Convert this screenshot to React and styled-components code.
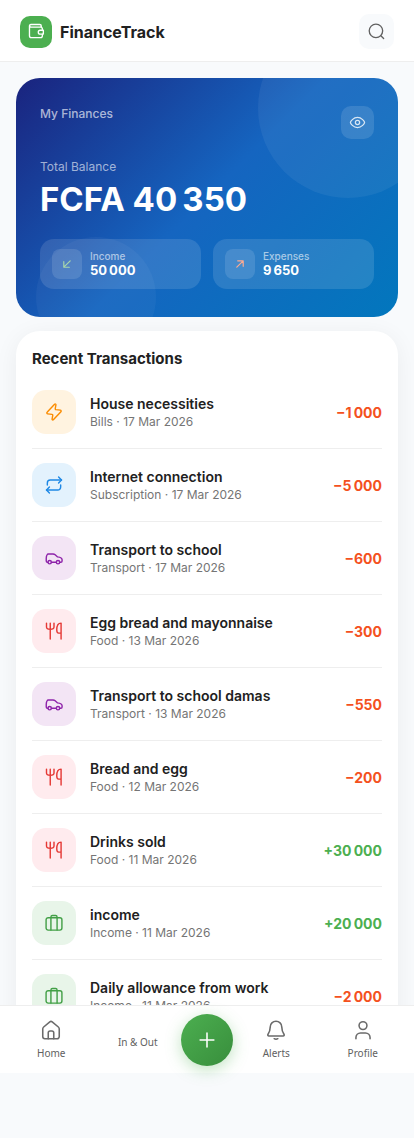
import React from "react";
import styled, { createGlobalStyle } from "styled-components";

const GlobalStyle = createGlobalStyle`
  *, *::before, *::after {
    box-sizing: border-box;
  }

  body {
    margin: 0;
    background: #f8fafc;
    color: #212121;
    font-family: Inter, "Liberation Sans", sans-serif;
  }

  h1, h2, p, ul {
    margin: 0;
    padding: 0;
  }

  button {
    border: none;
    padding: 0;
    font-family: inherit;
    cursor: pointer;
  }
`;

const Page = styled.div`
  height: 100vh;
  display: flex;
  flex-direction: column;
  padding-bottom: 65px;
`;

const Header = styled.header`
  display: flex;
  align-items: center;
  justify-content: space-between;
  padding: 14px 20px 12px;
  background: #fff;
  border-bottom: 1px solid #eeeeee;
`;

const Brand = styled.a`
  display: flex;
  align-items: center;
  gap: 8px;
  color: #212121;
  text-decoration: none;
  font-size: 16px;
  font-weight: 700;
`;

const BrandMark = styled.span`
  display: grid;
  place-items: center;
  width: 32px;
  height: 32px;
  border-radius: 10px;
  background: #4caf50;
  color: #fff;
`;

const SearchButton = styled.button`
  display: grid;
  place-items: center;
  width: 35px;
  height: 35px;
  border-radius: 10px;
  background: #f8fafc;
  color: #616161;
`;

const Content = styled.main`
  flex: 1;
  min-height: 0;
  display: flex;
  flex-direction: column;
  gap: 14px;
  padding: 16px 16px 0;
  overflow-y: auto;
  scrollbar-width: none;
`;

const BalanceCard = styled.section`
  position: relative;
  flex-shrink: 0;
  padding: 28px 24px;
  border-radius: 24px;
  overflow: hidden;
  color: #fff;
  background: linear-gradient(135deg, #1a237e 0%, #1565c0 50%, #0277bd 100%);

  &::before,
  &::after {
    content: "";
    position: absolute;
    border-radius: 50%;
    pointer-events: none;
  }

  &::before {
    top: -60px;
    right: -40px;
    width: 180px;
    height: 180px;
    background: rgba(255, 255, 255, 0.06);
  }

  &::after {
    bottom: -40px;
    left: 20px;
    width: 120px;
    height: 120px;
    background: rgba(255, 255, 255, 0.04);
  }
`;

const CardTop = styled.div`
  display: flex;
  align-items: flex-start;
  justify-content: space-between;
  margin-bottom: 20px;
`;

const CardTitle = styled.h2`
  font-size: 12px;
  line-height: 16px;
  font-weight: 500;
  color: rgba(255, 255, 255, 0.65);
`;

const EyeButton = styled.button`
  display: grid;
  place-items: center;
  width: 33px;
  height: 33px;
  border-radius: 10px;
  background: rgba(255, 255, 255, 0.12);
  color: rgba(255, 255, 255, 0.8);
`;

const BalanceLabel = styled.p`
  margin-bottom: 4px;
  font-size: 12px;
  line-height: 16px;
  color: rgba(255, 255, 255, 0.6);
`;

const Balance = styled.p`
  margin-bottom: 20px;
  font-size: 33px;
  line-height: 40px;
  font-weight: 700;
`;

const Stats = styled.div`
  display: grid;
  grid-template-columns: 1fr 1fr;
  gap: 12px;
`;

const Stat = styled.div`
  display: flex;
  align-items: center;
  gap: 8px;
  padding: 10px 12px;
  border-radius: 14px;
  background: rgba(255, 255, 255, 0.12);
`;

const StatIcon = styled.span`
  display: grid;
  place-items: center;
  width: 30px;
  height: 30px;
  border-radius: 8px;
  background: rgba(255, 255, 255, 0.12);
  color: ${({ $color }) => $color};
`;

const StatLabel = styled.p`
  font-size: 10px;
  line-height: 12px;
  font-weight: 500;
  color: rgba(255, 255, 255, 0.6);
`;

const StatValue = styled.p`
  font-size: 13px;
  line-height: 16px;
  font-weight: 700;
`;

const ListCard = styled.section`
  flex-shrink: 0;
  padding: 18px 16px;
  border-radius: 24px;
  background: #fff;
  box-shadow: 0 4px 24px rgba(0, 0, 0, 0.06);
`;

const ListTitle = styled.h2`
  margin-bottom: 7px;
  font-size: 15px;
  line-height: 20px;
  font-weight: 700;
`;

const List = styled.ul`
  list-style: none;
`;

const Row = styled.li`
  display: flex;
  align-items: center;
  gap: 14px;
  padding: 14px 0;
  border-bottom: 1px solid #eeeeee;

  &:last-child {
    border-bottom: none;
  }
`;

const CategoryIcon = styled.span`
  display: grid;
  place-items: center;
  flex-shrink: 0;
  width: 44px;
  height: 44px;
  border-radius: 14px;
  background: ${({ $background }) => $background};
  color: ${({ $color }) => $color};
`;

const RowText = styled.div`
  flex: 1;
  min-width: 0;
`;

const RowTitle = styled.p`
  font-size: 14px;
  line-height: 20px;
  font-weight: 600;
`;

const RowMeta = styled.p`
  font-size: 12px;
  line-height: 16px;
  color: #757575;
`;

const Amount = styled.span`
  font-size: 14px;
  line-height: 19px;
  font-weight: 700;
  color: ${({ $positive }) => ($positive ? "#4caf50" : "#f4511e")};
`;

const BottomNav = styled.nav`
  position: relative;
  display: flex;
  align-items: center;
  height: 68px;
  padding: 0 8px;
  background: #fff;
  border-top: 1px solid #eeeeee;
`;

const NavLink = styled.a`
  flex: 1;
  display: flex;
  flex-direction: column;
  align-items: center;
  gap: 4px;
  color: #616161;
  text-decoration: none;
  font-family: "Noto Sans", sans-serif;
  font-size: 10px;
  line-height: 16px;
`;

const NavIcon = styled.span`
  display: flex;
  color: #6b6b6b;
`;

const AddButton = styled.button`
  display: grid;
  place-items: center;
  width: 52px;
  height: 52px;
  border-radius: 50%;
  background: linear-gradient(135deg, #4caf50, #388e3c);
  box-shadow: 0 4px 16px rgba(76, 175, 80, 0.35);
  color: #fff;
`;

const paths = {
  wallet: (
    <>
      <path d="M20.5 9.5V8A2.5 2.5 0 0 0 18 5.500H5.200A1.750 1.750 0 0 1 5.200 2H17a2 2 0 0 1 2 2v1.600" />
      <path d="M3.300 3.800V17a2.500 2.500 0 0 0 2.500 2.500H18a2.500 2.500 0 0 0 2.500-2.500v-2" />
      <path d="M21.800 9.700v5.100h-4.200a2.550 2.550 0 0 1 0-5.100z" />
    </>
  ),
  search: (
    <>
      <circle cx="11.3" cy="11.2" r="8.5" />
      <path d="m17.500 17.300 3.500 3.500" />
    </>
  ),
  eye: (
    <>
      <path d="M2 12c0-1.200 4-7.200 10-7.200S22 10.800 22 12s-4 7.200-10 7.200S2 13.200 2 12z" />
      <circle cx="12" cy="12" r="3" />
    </>
  ),
  arrowDownLeft: <path d="M17.500 6.500 6.500 17.500M6.500 8v9.500H16" />,
  arrowUpRight: <path d="M6.500 17.500 17.500 6.500M8 6.500h9.500V16" />,
  bolt: (
    <path d="M12.700 2.800 3.700 12.400c-.6.6-.2 1.700.7 1.800l5.200.6c.6.1 1 .6.900 1.200l-.8 4.600c-.1.900.9 1.300 1.500.7l9.100-9.700c.6-.6.2-1.700-.7-1.800l-5.200-.6c-.6-.1-1-.6-.9-1.200l.8-4.500c.1-.9-1-1.400-1.600-.7z" />
  ),
  repeat: (
    <>
      <path d="M4 12V9.500A3.500 3.500 0 0 1 7.500 6H21" />
      <path d="m17.500 2.500 3.500 3.500-3.500 3.500" />
      <path d="M20 12v2.500a3.500 3.500 0 0 1-3.500 3.500H3" />
      <path d="M6.500 14.500 3 18l3.500 3.500" />
    </>
  ),
  car: (
    <>
      <path d="M4.800 17h-.6a1.500 1.500 0 0 1-1.500-1.500v-3.300c0-1.700.5-3.200 1-4.100.3-.6.9-.9 1.600-.9h5.500c1 0 1.900.3 2.600.9l2.900 2.600c2.700.3 5.400 1.200 5.400 3.500v1.300a1.500 1.500 0 0 1-1.500 1.500h-1.300M8.900 17h5.900" />
      <circle cx="6.800" cy="17" r="2" />
      <circle cx="16.800" cy="17" r="2" />
    </>
  ),
  food: (
    <>
      <path d="M3 2.500v4.800c0 1.500 1.500 2.700 4.500 2.700S12 8.800 12 7.300V2.500M7.500 2.500v19" />
      <path d="M20.500 21.500v-19c-3.300 0-5.200 3.500-5.200 8 0 2.800.7 4 2.200 4h3" />
    </>
  ),
  briefcase: (
    <>
      <rect x="2.500" y="5.700" width="19" height="14.800" rx="2.500" />
      <path d="M8.300 20.500V4.700A1.800 1.800 0 0 1 10.100 3h3.800a1.800 1.800 0 0 1 1.800 1.700v15.800" />
    </>
  ),
  home: (
    <>
      <path d="M3 10.800c0-.8.4-1.600 1-2.100l6.700-5.600a2 2 0 0 1 2.600 0L20 8.700c.6.500 1 1.300 1 2.100v8.400a2.300 2.300 0 0 1-2.300 2.300H5.300A2.300 2.300 0 0 1 3 19.200z" />
      <path d="M9 21.500V15a2 2 0 0 1 2-2h2a2 2 0 0 1 2 2v6.500" />
    </>
  ),
  bell: (
    <>
      <path d="M5.700 8.700a6.300 6.300 0 0 1 12.600 0c0 3.800 1.100 5.900 2.400 7.900.6.900.2 2-1 2H4.300c-1.200 0-1.600-1.100-1-2 1.300-2 2.400-4.100 2.400-7.900z" />
      <path d="M10 21.500c1.200.8 2.800.8 4 0" />
    </>
  ),
  user: (
    <>
      <circle cx="12" cy="7.200" r="4.300" />
      <path d="M4.300 21.500v-1.300a5 5 0 0 1 5-5h5.400a5 5 0 0 1 5 5v1.300" />
    </>
  ),
  plus: <path d="M12 4.500v15M4.500 12h15" />,
};

const Icon = ({ name, size = 20, strokeWidth = 1.7 }) => (
  <svg
    width={size}
    height={size}
    viewBox="0 0 24 24"
    fill="none"
    stroke="currentColor"
    strokeWidth={strokeWidth}
    strokeLinecap="round"
    strokeLinejoin="round"
    aria-hidden="true"
  >
    {paths[name]}
  </svg>
);

const categories = {
  Bills: { icon: "bolt", color: "#fb8c00", background: "#fff3e0" },
  Subscription: { icon: "repeat", color: "#1e88e5", background: "#e3f2fd" },
  Transport: { icon: "car", color: "#8e24aa", background: "#f3e5f5" },
  Food: { icon: "food", color: "#e53935", background: "#ffebee" },
  Income: { icon: "briefcase", color: "#43a047", background: "#e8f5e9" },
};

const transactions = [
  { title: "House necessities", category: "Bills", date: "17 Mar 2026", amount: -1000 },
  { title: "Internet connection", category: "Subscription", date: "17 Mar 2026", amount: -5000 },
  { title: "Transport to school", category: "Transport", date: "17 Mar 2026", amount: -600 },
  { title: "Egg bread and mayonnaise", category: "Food", date: "13 Mar 2026", amount: -300 },
  { title: "Transport to school damas", category: "Transport", date: "13 Mar 2026", amount: -550 },
  { title: "Bread and egg", category: "Food", date: "12 Mar 2026", amount: -200 },
  { title: "Drinks sold", category: "Food", date: "11 Mar 2026", amount: 30000 },
  { title: "income", category: "Income", date: "11 Mar 2026", amount: 20000 },
  { title: "Daily allowance from work", category: "Income", date: "11 Mar 2026", amount: -2000 },
];

// Narrow no-break space between thousands, as in French number formatting
const formatNumber = (value) =>
  String(Math.abs(value)).replace(/\B(?=(\d{3})+$)/g, "\u202f");

const NavItem = ({ icon, label }) => (
  <NavLink href="#">
    <NavIcon>{icon && <Icon name={icon} size={22} />}</NavIcon>
    {label}
  </NavLink>
);

const App = () => (
  <>
    <GlobalStyle />
    <Page>
      <Header>
        <Brand href="#">
          <BrandMark>
            <Icon name="wallet" size={18} strokeWidth={1.8} />
          </BrandMark>
          FinanceTrack
        </Brand>
        <SearchButton aria-label="Search">
          <Icon name="search" size={19} />
        </SearchButton>
      </Header>

      <Content>
        <BalanceCard>
          <CardTop>
            <CardTitle>My Finances</CardTitle>
            <EyeButton aria-label="Hide balance">
              <Icon name="eye" size={17} strokeWidth={1.8} />
            </EyeButton>
          </CardTop>
          <BalanceLabel>Total Balance</BalanceLabel>
          <Balance>FCFA {formatNumber(40350)}</Balance>
          <Stats>
            <Stat>
              <StatIcon $color="#a5d6a7">
                <Icon name="arrowDownLeft" size={14} strokeWidth={2} />
              </StatIcon>
              <div>
                <StatLabel>Income</StatLabel>
                <StatValue>{formatNumber(50000)}</StatValue>
              </div>
            </Stat>
            <Stat>
              <StatIcon $color="#ffab91">
                <Icon name="arrowUpRight" size={14} strokeWidth={2} />
              </StatIcon>
              <div>
                <StatLabel>Expenses</StatLabel>
                <StatValue>{formatNumber(9650)}</StatValue>
              </div>
            </Stat>
          </Stats>
        </BalanceCard>

        <ListCard>
          <ListTitle>Recent Transactions</ListTitle>
          <List>
            {transactions.map(({ title, category, date, amount }) => {
              const { icon, color, background } = categories[category];
              return (
                <Row key={title}>
                  <CategoryIcon $color={color} $background={background}>
                    <Icon name={icon} />
                  </CategoryIcon>
                  <RowText>
                    <RowTitle>{title}</RowTitle>
                    <RowMeta>
                      {category} · {date}
                    </RowMeta>
                  </RowText>
                  <Amount $positive={amount > 0}>
                    {amount > 0 ? "+" : "−"}
                    {formatNumber(amount)}
                  </Amount>
                </Row>
              );
            })}
          </List>
        </ListCard>
      </Content>

      <BottomNav>
        <NavItem icon="home" label="Home" />
        <NavItem label="In & Out" />
        <AddButton aria-label="Add transaction">
          <Icon name="plus" size={22} />
        </AddButton>
        <NavItem icon="bell" label="Alerts" />
        <NavItem icon="user" label="Profile" />
      </BottomNav>
    </Page>
  </>
);

export default App;
